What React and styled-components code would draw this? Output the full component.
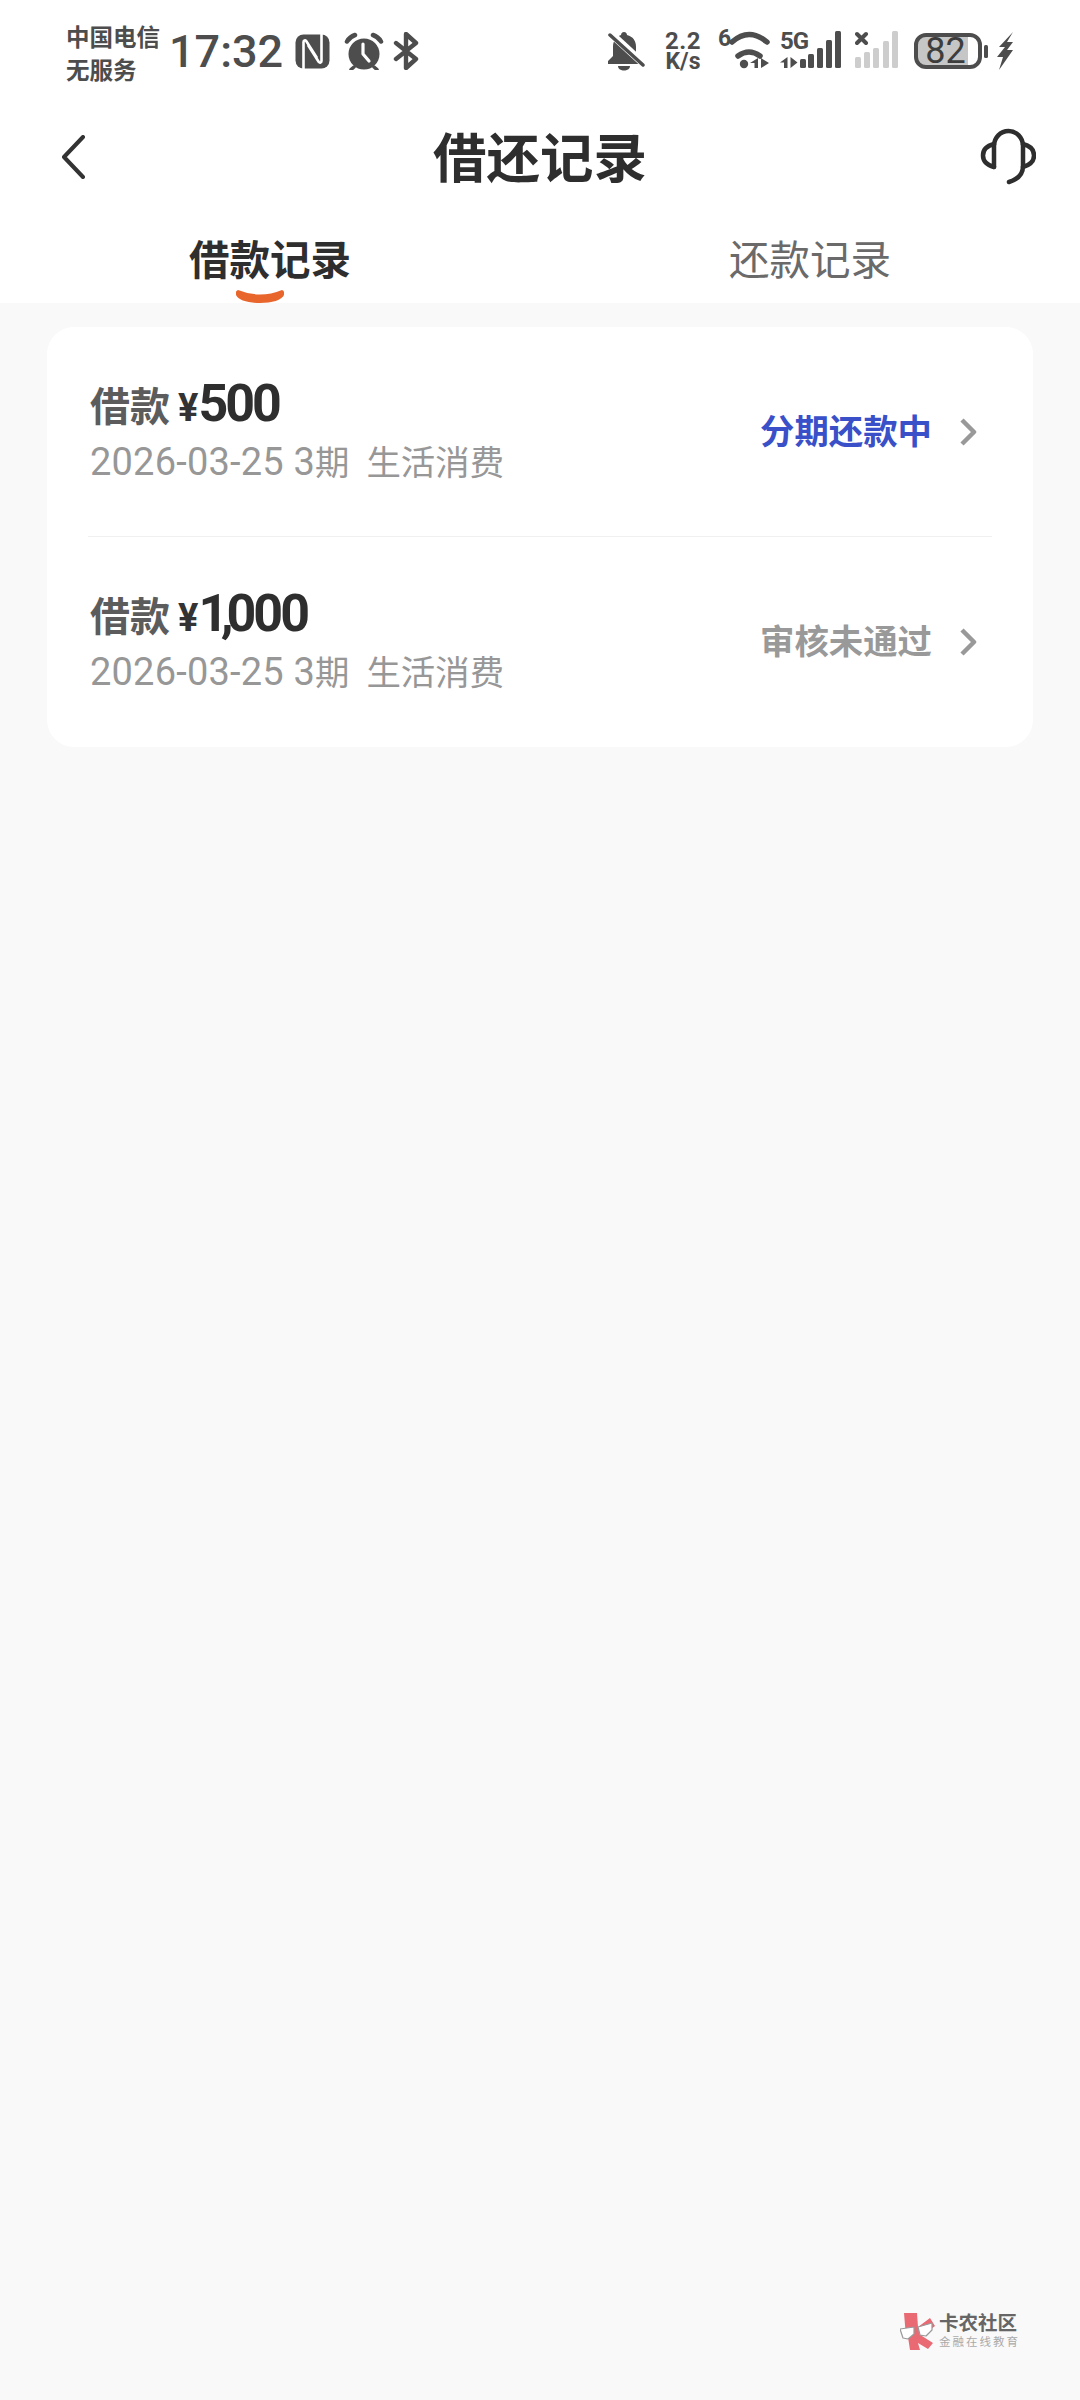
import React from 'react';
import styled, { createGlobalStyle } from 'styled-components';

const cjk = '"Roboto", "Noto Sans CJK SC", sans-serif';

const Global = createGlobalStyle`
  html, body { margin: 0; padding: 0; background: #f9f9f9; }
  * { box-sizing: border-box; }
`;

const Page = styled.div`
  position: relative;
  width: 1080px;
  height: 2400px;
  background: #f9f9f9;
  font-family: ${cjk};
  overflow: hidden;
`;
const Header = styled.header`
  height: 303px;
  background: #fff;
`;
const StatusBar = styled.div`
  height: 102px;
  padding: 0 67px 0 66px;
  display: flex;
  align-items: center;
  color: #4d4d4d;
`;
const Carrier = styled.div`
  width: 103px;
  margin-top: 8px;
  font-size: 23.5px;
  font-weight: 700;
  line-height: 33px;
  white-space: nowrap;
`;
const Clock = styled.div`
  width: 126px;
  font-size: 45px;
  font-weight: 500;
  line-height: 1;
`;
const StatusGroup = styled.div`
  display: flex;
  align-items: center;
  margin-left: ${p => (p.$push ? 'auto' : '0')};
`;
const Speed = styled.div`
  width: 40px;
  margin-left: 18px;
  display: flex;
  flex-direction: column;
  align-items: center;
  gap: 3px;
  font-weight: 700;
  white-space: nowrap;
`;
const SpeedValue = styled.div`
  font-size: 24px;
  line-height: 18px;
  letter-spacing: 0.5px;
`;
const SpeedUnit = styled.div`
  font-size: 23px;
  line-height: 18px;
`;
const IconBox = styled.div`
  position: relative;
  width: ${p => p.$w}px;
  height: 40px;
  margin-left: ${p => p.$left}px;
`;
const Six = styled.span`
  position: absolute;
  left: 0;
  top: -3px;
  font-size: 23px;
  line-height: 22px;
  font-weight: 700;
`;
const FiveG = styled.span`
  position: absolute;
  left: 0;
  top: 0;
  font-size: 24px;
  line-height: 20px;
  font-weight: 700;
  letter-spacing: -1px;
`;
const Battery = styled.div`
  width: 68px;
  height: 36px;
  margin-left: 15px;
  padding-right: 5px;
  border: 4px solid #4d4d4d;
  border-radius: 12px;
  display: flex;
  align-items: center;
  justify-content: center;
  font-size: 36px;
  line-height: 1;
  color: #3d3d3d;
  background: linear-gradient(to right, #c6c6c6 83%, #fff 83%);
`;
const NavBar = styled.nav`
  height: 110px;
  padding: 0 44px;
  display: grid;
  grid-template-columns: 1fr auto 1fr;
  align-items: center;
`;
const NavEnd = styled.div`
  display: flex;
  justify-content: ${p => (p.$right ? 'flex-end' : 'flex-start')};
  padding-left: ${p => (p.$right ? 0 : 16)}px;
`;
const Title = styled.h1`
  margin: 0;
  padding-top: 6px;
  font-size: 53.5px;
  font-weight: 700;
  line-height: 1;
  color: #2e2e2e;
`;
const Tabs = styled.div`
  height: 91px;
  display: grid;
  grid-template-columns: 1fr 1fr;
`;
const Tab = styled.div`
  position: relative;
  display: flex;
  justify-content: center;
  padding-top: 26px;
  font-size: 40.5px;
  line-height: 46px;
  font-weight: ${p => (p.$active ? 700 : 400)};
  color: ${p => (p.$active ? '#2e2e2e' : '#6a6a6a')};
`;
const Indicator = styled.svg`
  position: absolute;
  left: 236px;
  top: 78px;
`;
const Card = styled.section`
  margin: 24px 47px 0 47px;
  height: 420px;
  padding: 0 41px;
  background: #fff;
  border-radius: 27px;
`;
const Row = styled.div`
  height: 210px;
  display: flex;
  align-items: center;
  justify-content: space-between;
  border-bottom: ${p => (p.$divider ? '1px solid #f0f0f0' : 'none')};
`;
const Info = styled.div`
  display: flex;
  flex-direction: column;
  gap: 12px;
  padding: 0 0 3px 2px;
`;
const Amount = styled.div`
  display: flex;
  align-items: baseline;
  height: 52px;
  white-space: nowrap;
`;
const Label = styled.span`
  font-size: 40px;
  font-weight: 700;
  color: #5c5c5c;
  margin-right: 8px;
  line-height: 52px;
`;
const Yen = styled.span`
  font-size: 38px;
  font-weight: 700;
  color: #333;
  line-height: 52px;
`;
const Money = styled.span`
  font-size: 52px;
  font-weight: 700;
  color: #2e2e2e;
  letter-spacing: -3px;
  line-height: 52px;
`;
const Comma = styled.span`
  margin: 0 -4px 0 -4.5px;
`;
const Meta = styled.div`
  font-size: 34.4px;
  line-height: 40px;
  color: #979797;
  white-space: pre;
`;
const Digits = styled.span`
  font-size: 38px;
  letter-spacing: 0.2px;
`;
const MetaGap = styled.span`
  display: inline-block;
  width: 17px;
`;
const Side = styled.div`
  display: flex;
  align-items: center;
  gap: 27px;
  padding-right: 15px;
`;
const State = styled.span`
  font-size: 34.4px;
  font-weight: 700;
  line-height: 40px;
  color: ${p => p.$color};
`;
const Watermark = styled.div`
  position: absolute;
  left: 900px;
  top: 2312px;
  display: flex;
  align-items: center;
  gap: 3px;
`;
const WmText = styled.div`
  display: flex;
  flex-direction: column;
`;
const WmTitle = styled.div`
  font-size: 19.5px;
  line-height: 22px;
  font-weight: 700;
  color: #666;
`;
const WmSub = styled.div`
  font-size: 11.5px;
  line-height: 14px;
  letter-spacing: 2px;
  color: #aaa;
  white-space: nowrap;
`;

const Nfc = () => (
  <svg width="35" height="35" viewBox="0 0 35 35">
    <rect x="0.5" y="0.5" width="34" height="34" rx="8" fill="#4d4d4d" />
    <path d="M8.500 35V8c0-1.600 1.700-2.200 2.700-1L22 24M26.500 0v27c0 1.600-1.700 2.200-2.700 1L13 11" fill="none" stroke="#fff" strokeWidth="2.600" strokeLinejoin="round" />
  </svg>
);
const Alarm = () => (
  <svg width="40" height="38" viewBox="0 0 40 38" style={{ marginLeft: 14 }}>
    <circle cx="20" cy="22" r="15.500" fill="#4d4d4d" />
    <path d="M3 9.500C5 6 8 4 11 3M37 9.500C35 6 32 4 29 3" fill="none" stroke="#4d4d4d" strokeWidth="4.500" strokeLinecap="round" />
    <path d="M10 35l-3 2.500M30 35l3 2.500" stroke="#4d4d4d" strokeWidth="3.500" strokeLinecap="round" />
    <path d="M19 12v10l6 7" fill="none" stroke="#fff" strokeWidth="3.200" strokeLinecap="round" strokeLinejoin="round" />
  </svg>
);
const Bluetooth = () => (
  <svg width="26" height="38" viewBox="0 0 26 38" style={{ marginLeft: 9 }}>
    <path d="M3 11l20 16-10 9V2l10 9L3 27" fill="none" stroke="#4d4d4d" strokeWidth="4.400" strokeLinecap="round" strokeLinejoin="round" />
  </svg>
);
const BellOff = () => (
  <svg width="38" height="40" viewBox="0 0 38 40">
    <path d="M17 1c2 0 3 1.500 3 3 6 1.500 9 6 9 12v9l5 6v2H1v-3l5-5v-9c0-6 3-10.500 8-12 0-1.500 1-3 3-3z" fill="#4d4d4d" />
    <path d="M11 35h12c0 3-3 4.500-6 4.500S11 38 11 35z" fill="#4d4d4d" />
    <path d="M1 0l37 34" stroke="#fff" strokeWidth="7.500" />
    <path d="M3 4l33 30" stroke="#4d4d4d" strokeWidth="3.500" strokeLinecap="round" />
  </svg>
);
const Wifi = () => (
  <IconBox $w={52} $left={15}>
    <Six>6</Six>
    <svg width="52" height="40" viewBox="0 0 52 40">
      <path d="M14 11Q31-4 49 11" fill="none" stroke="#4d4d4d" strokeWidth="5.500" strokeLinecap="round" />
      <path d="M20 25Q31 17 42 25" fill="none" stroke="#4d4d4d" strokeWidth="5.500" strokeLinecap="round" />
      <circle cx="26" cy="33" r="4.200" fill="#4d4d4d" />
      <path d="M40 27v10h-3.500v-5H32zM43 27v10l8-5z" fill="#4d4d4d" />
    </svg>
  </IconBox>
);
const Signal = () => (
  <IconBox $w={62} $left={10}>
    <FiveG>5G</FiveG>
    <svg width="62" height="40" viewBox="0 0 62 40">
      <path d="M7.500 26v11H4v-5.500H0zM10.500 26v11l7-5.500z" fill="#4d4d4d" />
      <rect x="20" y="28" width="6" height="9" rx="1.500" fill="#4d4d4d" />
      <rect x="28" y="23" width="6" height="14" rx="1.500" fill="#4d4d4d" />
      <rect x="37" y="17" width="6" height="20" rx="1.500" fill="#4d4d4d" />
      <rect x="46" y="9" width="6" height="28" rx="1.500" fill="#4d4d4d" />
      <rect x="55" y="0" width="6" height="37" rx="1.500" fill="#4d4d4d" />
    </svg>
  </IconBox>
);
const SignalOff = () => (
  <svg width="44" height="40" viewBox="0 0 44 40" style={{ marginLeft: 13 }}>
    <path d="M2 3l9 9M11 3l-9 9" stroke="#4d4d4d" strokeWidth="4" strokeLinecap="round" />
    <rect x="0" y="26" width="6" height="11" rx="1.500" fill="#cdcdcd" />
    <rect x="9" y="21" width="6" height="16" rx="1.500" fill="#cdcdcd" />
    <rect x="18" y="17" width="6" height="20" rx="1.500" fill="#cdcdcd" />
    <rect x="28" y="10" width="6" height="27" rx="1.500" fill="#cdcdcd" />
    <rect x="37" y="0" width="6" height="37" rx="1.500" fill="#cdcdcd" />
  </svg>
);
const Nub = () => (
  <svg width="4" height="13" viewBox="0 0 4 13" style={{ marginLeft: 2 }}>
    <rect width="4" height="13" rx="1.500" fill="#4d4d4d" />
  </svg>
);
const Bolt = () => (
  <svg width="16" height="38" viewBox="0 0 16 38" style={{ marginLeft: 9 }}>
    <path d="M16 0 2 15h6L0 25h6L2 38 16 18h-6l6-8h-6z" fill="#4d4d4d" />
  </svg>
);
const Back = () => (
  <svg width="26" height="44" viewBox="0 0 26 44">
    <path d="M23 2 4 22l19 20" fill="none" stroke="#333" strokeWidth="4" strokeLinecap="round" strokeLinejoin="round" />
  </svg>
);
const Headset = () => (
  <svg width="56" height="58" viewBox="0 0 56 58">
    <path d="M14 39V18a14.500 15 0 0 1 29 0V38c0 7-4 13-14 16" fill="none" stroke="#2e2e2e" strokeWidth="4.500" strokeLinecap="round" />
    <path d="M14 16C6 18 3 22 3 27.500S7 37 14 39M43 16C51 18 54 22 54 27.500S50 37 43 39" fill="none" stroke="#2e2e2e" strokeWidth="4.500" strokeLinecap="round" />
  </svg>
);
const Chevron = () => (
  <svg width="18" height="30" viewBox="0 0 18 30">
    <path d="M3 3l12 12L3 27" fill="none" stroke="#999" strokeWidth="4.500" strokeLinejoin="round" />
  </svg>
);
const Logo = () => (
  <svg width="36" height="38" viewBox="0 0 36 38">
    <path d="M4 1h13l1 14L30 6l5 8-13 10 11 7-5 6-10-6 2 7H10l-2-13H6z" fill="#ea6a74" />
    <path d="M0 17l14-2v7l-6 5-5-1zM18 15l14-4v7l-6 6-6-1z" fill="#fff" stroke="#999" strokeWidth="1.200" strokeLinejoin="round" />
  </svg>
);

const Record = ({ amount, status, color, divider }) => (
  <Row $divider={divider}>
    <Info>
      <Amount>
        <Label>借款</Label>
        <Yen>¥</Yen>
        <Money>{amount}</Money>
      </Amount>
      <Meta>
        <Digits>2026-03-25 3</Digits>期<MetaGap />生活消费
      </Meta>
    </Info>
    <Side>
      <State $color={color}>{status}</State>
      <Chevron />
    </Side>
  </Row>
);

export default function App() {
  return (
    <Page>
      <Global />
      <Header>
        <StatusBar>
          <Carrier>中国电信<br />无服务</Carrier>
          <Clock>17:32</Clock>
          <StatusGroup>
            <Nfc />
            <Alarm />
            <Bluetooth />
          </StatusGroup>
          <StatusGroup $push>
            <BellOff />
            <Speed>
              <SpeedValue>2.2</SpeedValue>
              <SpeedUnit>K/s</SpeedUnit>
            </Speed>
            <Wifi />
            <Signal />
            <SignalOff />
            <Battery>82</Battery>
            <Nub />
            <Bolt />
          </StatusGroup>
        </StatusBar>
        <NavBar>
          <NavEnd><Back /></NavEnd>
          <Title>借还记录</Title>
          <NavEnd $right><Headset /></NavEnd>
        </NavBar>
        <Tabs>
          <Tab $active>
            借款记录
            <Indicator width="48" height="13" viewBox="0 0 48 13">
              <path d="M2 0Q24 9 46 0Q49 1 48 5C46 10 36 13 24 13S2 10 0 5Q-1 1 2 0z" fill="#e8662c" />
            </Indicator>
          </Tab>
          <Tab>还款记录</Tab>
        </Tabs>
      </Header>
      <Card>
        <Record amount="500" status="分期还款中" color="#3a50c8" divider />
        <Record amount={<>1<Comma>,</Comma>000</>} status="审核未通过" color="#999" />
      </Card>
      <Watermark>
        <Logo />
        <WmText>
          <WmTitle>卡农社区</WmTitle>
          <WmSub>金融在线教育</WmSub>
        </WmText>
      </Watermark>
    </Page>
  );
}
